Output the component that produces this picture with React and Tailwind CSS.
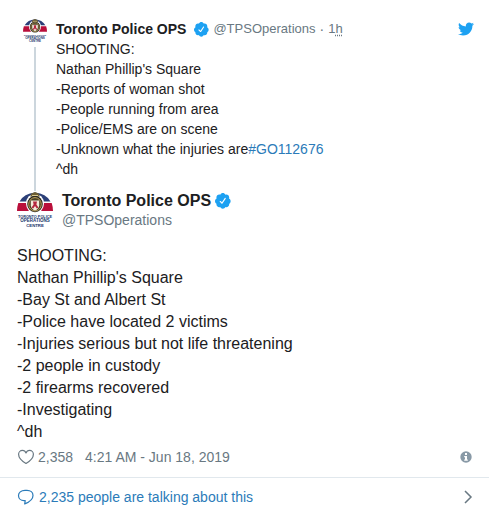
import React from 'react';
import { FaTwitter } from 'react-icons/fa';

const replyLines = [
    "SHOOTING:",
    "Nathan Phillip's Square",
    "-Bay St and Albert St",
    "-Police have located 2 victims",
    "-Injuries serious but not life threatening",
    "-2 people in custody",
    "-2 firearms recovered",
    "-Investigating",
    "^dh",
];

const parentLines = [
    "SHOOTING:",
    "Nathan Phillip's Square",
    "-Reports of woman shot",
    "-People running from area",
    "-Police/EMS are on scene",
];

function Avatar({ className }) {
    return (
        <svg viewBox="0 0 36 36" className={className} role="img" aria-label="Toronto Police Operations Centre">
            <path d="M2.500 9.500Q7 1.500 18 .5q11 1 15.500 9z" fill="#2b3f78" />
            <path d="M1.300 11h33.400q1.200 3.500 1.300 8H0q.1-4.500 1.300-8z" fill="#b90f3b" />
            {/* crest */}
            <ellipse cx="18" cy="11.500" rx="9" ry="9.800" fill="#fff" />
            <path d="M18 0l3.500 1.500 1.500 3H13l1.500-3z" fill="#6b5d33" />
            <ellipse cx="18" cy="12" rx="7.800" ry="8.300" fill="#2b2820" />
            <ellipse cx="18" cy="12.300" rx="6.300" ry="6.700" fill="#4a4227" stroke="#c0a45a" strokeWidth="1" />
            <path d="M15 3.500h6" stroke="#d9c98e" strokeWidth="1" />
            <path d="M13.800 8.500h8.400v5q-.5 3.500-4.200 5-3.700-1.500-4.200-5z" fill="#f3eadb" />
            <path d="M16 9.500h4l-.6 3 2 3-1.600 1-1.800-2.500-1.800 2.500-1.600-1 2-3z" fill="#b3273f" />
            <g fill="#20356b" fontFamily="Liberation Sans, Arial, sans-serif" fontWeight="700" textAnchor="middle">
                <text x="18" y="25.800" fontSize="3.800">TORONTO POLICE</text>
                <text x="18" y="30.200" fontSize="4.500">OPERATIONS</text>
                <text x="18" y="34.500" fontSize="4.300">CENTRE</text>
            </g>
        </svg>
    );
}

function Verified({ className }) {
    return (
        <svg viewBox="1.500 1.500 21.500 21.500" className={className} role="img" aria-label="Verified account">
            <circle cx="12" cy="12.500" r="7" fill="#fff" />
            <path
                fill="#1da1f2"
                d="M22.5 12.5c0-1.58-.875-2.95-2.148-3.6.154-.435.238-.905.238-1.4 0-2.21-1.71-3.998-3.818-3.998-.47 0-.92.084-1.336.25C14.818 2.415 13.51 1.5 12 1.5s-2.816.917-3.437 2.25c-.415-.165-.866-.25-1.336-.25-2.11 0-3.818 1.79-3.818 4 0 .494.083.964.237 1.4-1.272.65-2.147 2.018-2.147 3.6 0 1.495.782 2.798 1.942 3.486-.02.17-.032.34-.032.514 0 2.21 1.708 4 3.818 4 .47 0 .92-.086 1.335-.25.62 1.334 1.926 2.25 3.437 2.25 1.512 0 2.818-.916 3.437-2.25.415.163.865.248 1.336.248 2.11 0 3.818-1.79 3.818-4 0-.174-.012-.344-.033-.513 1.158-.687 1.943-1.99 1.943-3.484zm-6.616-3.334l-4.334 6.5c-.145.217-.382.334-.625.334-.143 0-.288-.04-.416-.126l-.115-.094-2.415-2.415c-.293-.293-.293-.768 0-1.06s.768-.294 1.06 0l1.77 1.767 3.825-5.74c.23-.345.696-.436 1.04-.207.346.23.44.696.21 1.04z"
            />
        </svg>
    );
}

function ParentTweet() {
    return (
        <div className="flex">
            <div className="flex w-9 shrink-0 flex-col items-center">
                <Avatar className="h-6 w-6" />
                <div className="mt-1 w-[2px] grow bg-[#ccd6dd]" />
            </div>
            <div className="grow pb-3 pl-[3px] text-sm leading-5">
                <div className="flex items-center">
                    <a href="#profile" className="flex items-center">
                        <span className="font-bold">Toronto Police OPS</span>
                        <Verified className="ml-2 h-[15px] w-[15px]" />
                        <span className="ml-1 text-[13px] text-[#697882]">@TPSOperations</span>
                    </a>
                    <span className="mx-1 text-[#697882]">·</span>
                    <a href="#status" className="text-[13px] text-[#697882]">
                        1<abbr title="hours" className="underline decoration-dotted underline-offset-2">h</abbr>
                    </a>
                    <a href="#twitter" aria-label="View on Twitter" className="ml-auto text-[#1da1f2]">
                        <FaTwitter className="h-4 w-4" />
                    </a>
                </div>
                {parentLines.map((line) => (
                    <p key={line}>{line}</p>
                ))}
                <p>
                    -Unknown what the injuries are<a href="#GO112676" className="text-[#2b7bb9]">#GO112676</a>
                </p>
                <p>^dh</p>
            </div>
        </div>
    );
}

function App() {
    return (
        <div className="bg-white pt-[19px] font-['Liberation_Sans',Arial,sans-serif] text-[#1c2022]">
            <article className="pr-[15px] pl-[17px]">
                <ParentTweet />
                <a href="#profile" className="flex items-center">
                    <Avatar className="h-9 w-9" />
                    <span className="ml-[9px]">
                        <span className="flex items-center text-base leading-5 font-bold">
                            Toronto Police OPS
                            <Verified className="ml-1 h-4 w-4" />
                        </span>
                        <span className="block text-sm leading-[18px] text-[#697882]">@TPSOperations</span>
                    </span>
                </a>
                <div className="mt-4 text-base leading-[22px]">
                    {replyLines.map((line) => (
                        <p key={line}>{line}</p>
                    ))}
                </div>
                <div className="mt-1 flex items-center text-sm leading-5 text-[#697882]">
                    <a href="#like" className="flex items-center">
                        <svg viewBox="0 0 17 16" className="mr-1 h-4 w-[17px]" fill="none" stroke="currentColor" strokeWidth="1.200" strokeLinejoin="round" aria-label="Like">
                            <path d="M9 4C8.300 2.200 6.900 1.400 5.500 1.400 3.200 1.400 1.600 3.200 1.600 5.300c0 3.500 3.900 7.200 7.400 9.200 3.500-2 7.400-5.700 7.400-9.200 0-2.100-1.600-3.900-3.900-3.900C11.100 1.400 9.700 2.200 9 4z" />
                        </svg>
                        2,358
                    </a>
                    <a href="#status" className="ml-3">4:21 AM - Jun 18, 2019</a>
                    <a href="#info" aria-label="Twitter Ads info and privacy" className="mr-[2px] ml-auto">
                        <svg viewBox="0 0 12 12" className="h-3 w-3">
                            <circle cx="6" cy="6" r="5.700" fill="#8899a6" />
                            <path d="M5 2h2v2H5zM4.200 5H7v3.500h.8v1.300H4.200V8.500H5V6.300h-.8z" fill="#fff" />
                        </svg>
                    </a>
                </div>
            </article>
            <a href="#conversation" className="mt-[10px] flex items-center border-t border-[#e1e8ed] py-[9px] pr-4 pl-[17px] text-sm leading-5 text-[#2b7bb9]">
                <svg viewBox="0 0 17 16" className="mr-[5px] h-4 w-[17px]" fill="none" stroke="currentColor" strokeWidth="1.200" strokeLinejoin="round">
                    <path d="M8 1.400h2c3.500 0 6 2 6 5 0 3.200-3 6.300-8.300 8.500l.5-3.300H7c-3.300 0-5.500-2.200-5.500-5.100s2.500-5.100 6.500-5.100z" />
                </svg>
                2,235 people are talking about this
                <svg viewBox="0 0 10 14" className="ml-auto h-[14px] w-[10px]" fill="none" stroke="#697882" strokeWidth="1.500">
                    <path d="M2 1l6 6-6 6" />
                </svg>
            </a>
        </div>
    );
}

export default App;
